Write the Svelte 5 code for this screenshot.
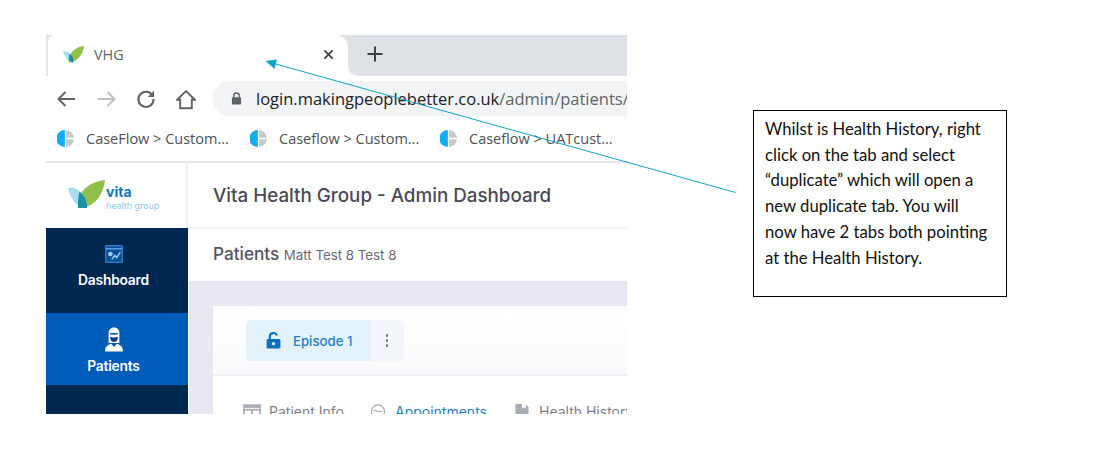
<script>
  const bookmarks = [
    { label: 'CaseFlow > Custom...', width: 193 },
    { label: 'Caseflow > Custom...', width: 190 },
    { label: 'Caseflow > UATcust...', width: 180 }
  ];
</script>

<div class="page">
  <div class="shot">
    <div class="tabstrip">
      <div class="tab">
        <svg class="favicon" viewBox="0 0 20 16" aria-hidden="true">
          <path d="M0 5 C5 4 9 7 10 15.5 C5 15.5 2 11 0 5Z" fill="#a9dcf0"/>
          <path d="M20 0 C12 1 5 6 5.5 15.5 C14 15.5 19 8 20 0Z" fill="#8fc04a"/>
          <path d="M6 7.5 C8.5 9 10 11 10 15.5 C7.5 15.5 5.5 14 5.5 11Z" fill="#1b8fa6"/>
        </svg>
        <span class="tabtitle">VHG</span>
        <svg class="close" viewBox="0 0 12 12" aria-hidden="true"><path d="M1.5 1.5 10.5 10.5M10.5 1.5 1.5 10.5" stroke="#3c4043" stroke-width="1.9"/></svg>
      </div>
      <div class="newtab">
        <svg viewBox="0 0 16 16" aria-hidden="true"><path d="M8 0.5V15.5M0.5 8H15.5" stroke="#3c4043" stroke-width="2"/></svg>
      </div>
    </div>

    <div class="toolbar">
      <svg class="tool" viewBox="0 0 20 20" aria-hidden="true"><path d="M19 10H2.5M9.5 3 2.5 10 9.5 17" fill="none" stroke="#5f6368" stroke-width="2"/></svg>
      <svg class="tool off" viewBox="0 0 20 20" aria-hidden="true"><path d="M1 10H17.5M10.5 3 17.5 10 10.5 17" fill="none" stroke="#bdc1c6" stroke-width="2"/></svg>
      <svg class="tool" viewBox="0 0 20 20" aria-hidden="true"><path d="M16.4 6.2A7.6 7.6 0 1 0 17.6 10" fill="none" stroke="#5f6368" stroke-width="2.1"/><path d="M18 1.8V8H11.8Z" fill="#5f6368"/></svg>
      <svg class="tool home" viewBox="0 0 20 20" aria-hidden="true"><path d="M10 1.6 1.2 10.2H4.2V18.8H15.8V10.2H18.8Z" fill="none" stroke="#5f6368" stroke-width="1.9"/></svg>
      <div class="omnibox">
        <svg class="lock" viewBox="0 0 12 14" aria-hidden="true"><path d="M3 6V4a3 3 0 0 1 6 0V6" fill="none" stroke="#5f6368" stroke-width="1.5"/><rect x="1" y="5.5" width="10" height="8" rx="1" fill="#5f6368"/></svg>
        <span class="url">login.makingpeoplebetter.co.uk<span class="path">/admin/patients/</span></span>
      </div>
    </div>

    <div class="bookmarks">
      {#each bookmarks as b}
        <div class="bookmark" style="width:{b.width}px">
          <svg viewBox="0 0 16 16" aria-hidden="true">
            <path d="M7.4 0A8 8 0 0 0 7.4 16Z" fill="#14aef0"/>
            <path d="M8.6 0A8 8 0 0 1 16 7.4H8.6Z" fill="#c6c8ca"/>
            <path d="M8.6 8.6H16A8 8 0 0 1 8.6 16Z" fill="#c6c8ca"/>
          </svg>
          <span>{b.label}</span>
        </div>
      {/each}
    </div>

    <div class="app">
      <aside class="sidebar">
        <div class="logo">
          <svg viewBox="0 0 37 28" aria-hidden="true">
            <path d="M0 8 C8 6 17 12 19 28 C9 28 3 20 0 8Z" fill="#a9dcf0"/>
            <path d="M37 0 C22 2 9 10 10 28 C26 28 35 16 37 0Z" fill="#8fc04a"/>
            <path d="M11.5 11.5 C16 15 19 20 19 28 C15 28 12 28 10 28 C9.8 21 10.5 15 11.5 11.5Z" fill="#1b8fa6"/>
          </svg>
          <div class="logotext"><b>vita</b><span>health group</span></div>
        </div>
        <div class="nav dashboard">
          <svg viewBox="0 0 20 20" aria-hidden="true">
            <rect x="0.8" y="0.8" width="18.4" height="18.4" rx="1" fill="#0b4f97" stroke="#2f7fd0" stroke-width="1.4"/>
            <path d="M1 4.2H19" stroke="#5ba7e8" stroke-width="1.6"/>
            <circle cx="6" cy="10" r="2.6" fill="#9ccdf5"/>
            <path d="M7.5 16 11 11.5 13 14 17 8" fill="none" stroke="#9ccdf5" stroke-width="1.6"/>
          </svg>
          <span>Dashboard</span>
        </div>
        <div class="nav patients">
          <svg viewBox="0 0 18 25" aria-hidden="true">
            <path d="M9 0.5C5.5 0.5 3.6 3 3.6 6.5V16H14.4V6.5C14.4 3 12.5 0.5 9 0.5Z" fill="#fff"/>
            <path d="M5.2 6H12.8V7.6H5.2Z" fill="#005cb9"/>
            <path d="M5.2 9.8C7 10.8 11 10.8 12.8 9.8V11.4C12.2 13.6 10.8 15 9 15S5.8 13.6 5.2 11.4Z" fill="#0a3f86"/>
            <path d="M0 24.5C0 20 2.5 18 6.2 16.8L9 20 11.8 16.8C15.5 18 18 20 18 24.5Z" fill="#fff"/>
          </svg>
          <span>Patients</span>
        </div>
        <div class="navfill"></div>
      </aside>

      <main class="main">
        <header class="title">Vita Health Group - Admin Dashboard</header>
        <div class="crumb"><strong>Patients</strong> <small>Matt Test 8 Test 8</small></div>
        <div class="canvas">
          <section class="card">
            <div class="cardhead">
              <div class="episode">
                <div class="epmain">
                  <svg viewBox="0 0 14 16" aria-hidden="true"><path d="M3.5 7V4.5a3.5 3.5 0 0 1 6.8-1.2" fill="none" stroke="#0d72b9" stroke-width="2"/><rect x="0.5" y="6.5" width="13" height="9" rx="1.2" fill="#0d72b9"/><circle cx="7" cy="11" r="1.5" fill="#e4f1fa"/></svg>
                  <span>Episode 1</span>
                </div>
                <div class="epmenu"><i></i><i></i><i></i></div>
              </div>
            </div>
            <nav class="tabs">
              <div class="pt grey">
                <svg viewBox="0 0 20 16" aria-hidden="true"><rect width="20" height="16" rx="1" fill="#a9abb5"/><rect x="1.5" y="4" width="17" height="1" fill="#fff"/><rect x="2" y="7" width="7" height="7" fill="#fff"/><rect x="11" y="7" width="7" height="7" fill="#fff"/></svg>
                <span>Patient Info</span>
              </div>
              <div class="pt blue">
                <svg viewBox="0 0 16 16" aria-hidden="true"><circle cx="8" cy="8" r="7" fill="none" stroke="#a9abb5" stroke-width="1.3"/><path d="M3 6.5 8 8 13 8" fill="none" stroke="#a9abb5" stroke-width="1.3"/></svg>
                <span>Appointments</span>
              </div>
              <div class="pt grey">
                <svg viewBox="0 0 14 16" aria-hidden="true"><path d="M0 0H7V5L9 3.5 11 5V0.5L14 3.5V16H0Z" fill="#a9abb5"/></svg>
                <span>Health History</span>
              </div>
            </nav>
          </section>
        </div>
      </main>
    </div>
  </div>

  <div class="note">
    <p>Whilst is Health History, right click on the tab and select “duplicate” which will open a new duplicate tab. You will now have 2 tabs both pointing at the Health History.</p>
  </div>

  <svg class="arrow" viewBox="0 0 1111 461" aria-hidden="true">
    <path d="M735.5 192.5 274 63.5" stroke="#10a5c6" stroke-width="1" fill="none"/>
    <path d="M265.5 61 277 59.5 274.5 69Z" fill="#10a5c6"/>
  </svg>
</div>

<style>
  :global(body) { margin: 0; background: #fff; }
  .page {
    position: relative;
    width: 1111px;
    height: 461px;
    box-sizing: border-box;
    padding: 35px 0 0 46px;
    display: flex;
    align-items: flex-start;
    overflow: hidden;
    font-family: "Open Sans", "Liberation Sans", sans-serif;
  }
  .shot {
    width: 581px;
    height: 379px;
    flex: none;
    overflow: hidden;
    display: flex;
    flex-direction: column;
    background: #fff;
  }

  .tabstrip { height: 41px; flex: none; display: flex; background: linear-gradient(#dee1e6 50%, #fff 50%); }
  .tab {
    width: 302px;
    flex: none;
    box-sizing: border-box;
    display: flex;
    align-items: center;
    background: #fff;
    border-left: 2px solid #e3e5e8;
    border-radius: 8px 12px 0 0;
    padding: 0 14px 3px 15px;
  }
  .favicon { width: 21px; height: 17px; flex: none; }
  .tabtitle { margin-left: 10px; font-size: 14.4px; color: #5f6368; flex: 1; }
  .close { width: 11px; height: 11px; flex: none; }
  .newtab { flex: 1; background: #dee1e6; border-radius: 0 0 0 10px; padding: 11px 0 0 19px; }
  .newtab svg { display: block; width: 16px; height: 16px; }

  .toolbar { height: 44px; flex: none; display: flex; align-items: flex-start; padding: 5px 0 0 10px; box-sizing: border-box; }
  .tool { width: 20px; height: 20px; flex: none; margin: 8px 21px 0 0; }
  .tool.off { margin-right: 19px; }
  .tool:nth-child(3) { margin-right: 20px; }
  .tool.home { margin-right: 17px; width: 20px; height: 21px; }
  .omnibox {
    flex: none;
    width: 500px;
    height: 35px;
    border-radius: 18px;
    background: #f1f3f4;
    display: flex;
    align-items: center;
    padding-left: 18px;
    box-sizing: border-box;
    overflow: hidden;
  }
  .lock { width: 11px; height: 13px; flex: none; }
  .url { margin-left: 14px; font-size: 16.5px; color: #202124; white-space: nowrap; }
  .path { color: #5f6368; }

  .bookmarks {
    height: 43px;
    flex: none;
    box-sizing: border-box;
    border-bottom: 2px solid #e7e7e7;
    display: flex;
    align-items: center;
    padding: 0 0 4px 11px;
  }
  .bookmark { display: flex; align-items: center; flex: none; font-size: 14.5px; color: #4d5156; white-space: nowrap; }
  .bookmark svg { width: 17px; height: 17px; flex: none; margin-right: 12px; }

  .app { flex: 1; min-height: 0; display: flex; font-family: Inter, "Open Sans", sans-serif; }
  .sidebar { width: 142px; flex: none; display: flex; flex-direction: column; background: #00274f; }
  .logo { height: 65px; flex: none; display: flex; align-items: flex-start; background: #fff; border-right: 2px solid #f0f0f5; box-sizing: border-box; padding: 17px 0 0 22px; }
  .logo svg { width: 37px; height: 28px; flex: none; }
  .logotext { display: flex; flex-direction: column; margin: 4px 0 0 1px; white-space: nowrap; }
  .logotext b { font-size: 14px; line-height: 16px; color: #1177bd; font-weight: 700; }
  .logotext span { font-size: 9.1px; line-height: 12px; color: #8ccbe9; letter-spacing: -0.1px; }

  .nav { display: flex; flex-direction: column; align-items: center; color: #fff; font-size: 13.8px; font-weight: 600; letter-spacing: -0.2px; flex: none; box-sizing: border-box; padding-right: 7px; }
  .dashboard { height: 85px; background: #00274f; padding-top: 17px; gap: 9px; }
  .dashboard svg { width: 18px; height: 18px; }
  .patients { height: 72px; background: #005cb9; padding-top: 14px; gap: 6px; }
  .patients svg { width: 18px; height: 25px; }
  .navfill { flex: 1; }

  .main { flex: 1; min-width: 0; display: flex; flex-direction: column; padding-left: 1px; background: #fff; }
  .title { height: 66px; flex: none; box-sizing: border-box; border-bottom: 2px solid #f0f0f5; padding: 22px 0 0 24px; font-size: 18.8px; font-weight: 500; color: #4a4a55; white-space: nowrap; line-height: 22px; }
  .crumb { height: 52px; flex: none; box-sizing: border-box; padding: 15px 0 0 24px; color: #55555f; white-space: nowrap; line-height: 20px; }
  .crumb strong { font-size: 17.2px; font-weight: 500; }
  .crumb small { font-size: 13.3px; font-weight: 400; color: #6a6a74; }
  .canvas { flex: 1; min-height: 0; background: #e6e7f1; padding: 25px 0 0 24px; overflow: hidden; }
  .card { width: 480px; height: 200px; background: #fff; border-radius: 6px 0 0 0; }
  .cardhead { height: 70px; box-sizing: border-box; padding: 14px 0 0 33px; border-bottom: 2px solid #eeeef4; background: linear-gradient(#fff, #fafafc); }
  .episode { display: flex; width: 158px; height: 41px; border-radius: 5px; overflow: hidden; background: #f2f6fa; }
  .epmain { width: 124px; flex: none; display: flex; align-items: center; gap: 12px; padding-left: 20px; box-sizing: border-box; background: #e3f1fa; color: #1f82c4; font-size: 13.2px; font-weight: 500; white-space: nowrap; }
  .epmain svg { width: 15px; height: 17px; flex: none; }
  .epmenu { flex: 1; display: flex; flex-direction: column; align-items: center; justify-content: center; gap: 2.5px; }
  .epmenu i { width: 2.5px; height: 2.5px; border-radius: 50%; background: #6d7580; }
  .tabs { display: flex; padding: 26px 0 0 30px; font-size: 14px; white-space: nowrap; }
  .pt { display: flex; align-items: center; gap: 8px; height: 18px; flex: none; }
  .pt svg { width: 18px; height: 15px; flex: none; }
  .pt:nth-child(1) { width: 126px; }
  .pt:nth-child(2) { width: 144px; }
  .grey { color: #7c7e8a; }
  .blue { color: #1f7fc0; }

  .note {
    flex: none;
    box-sizing: border-box;
    width: 254px;
    height: 187px;
    margin: 75px 0 0 126px;
    border: 1px solid #000;
    background: #fff;
    padding: 6px 13px 0 11px;
    font-family: Lato, "Open Sans", sans-serif;
    font-size: 16.7px;
    line-height: 25.7px;
    color: #111;
  }
  .note p { margin: 0; }

  .arrow { position: absolute; inset: 0; width: 1111px; height: 461px; pointer-events: none; }
</style>
